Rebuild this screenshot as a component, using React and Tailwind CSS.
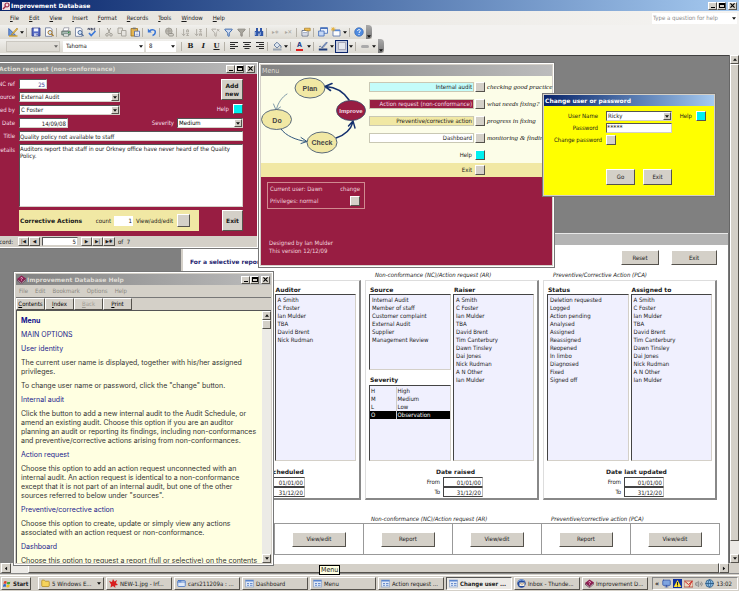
import { useState } from "react";
import {
  AppWindow,
  ArrowDownAZ,
  ArrowDownZA,
  Filter,
  FilterX,
  Folder,
  Globe,
  Monitor,
  Volume2,
} from "lucide-react";

const raised =
  "border border-t-white border-l-white border-b-[#55524c] border-r-[#55524c] bg-[#d4d0c8]";
const sunken = "border border-t-[#555] border-l-[#555] border-b-[#d4d0c8] border-r-[#d4d0c8] bg-white";
const bold = "font-[DejaVu_Sans,sans-serif] font-bold";

const PEOPLE = [
  "A Smith",
  "C Foster",
  "Ian Mulder",
  "TBA",
  "David Brent",
  "Tim Canterbury",
  "Dawn Tinsley",
  "Dai Jones",
  "Nick Rudman",
  "A N Other",
  "Ian Mulder",
];

const AUDITORS = ["A Smith", "C Foster", "Ian Mulder", "TBA", "David Brent", "Nick Rudman"];

const SOURCES = [
  "Internal Audit",
  "Member of staff",
  "Customer complaint",
  "External Audit",
  "Supplier",
  "Management Review",
];

const STATUSES = [
  "Deletion requested",
  "Logged",
  "Action pending",
  "Analysed",
  "Assigned",
  "Reassigned",
  "Reopened",
  "In limbo",
  "Diagnosed",
  "Fixed",
  "Signed off",
];

const SEVERITIES = [
  ["H", "High"],
  ["M", "Medium"],
  ["L", "Low"],
  ["O", "Observation"],
];

const Caret = () => (
  <svg viewBox="0 0 5 3" className="w-[4px] h-[3px] shrink-0" aria-hidden="true">
    <path d="M0 0h5L2.5 3z" fill="#111" />
  </svg>
);

/* Minimise / maximise / close */
const WindowButtons = () => (
  <div className="flex ml-auto shrink-0">
    <button aria-label="Minimise" className={`${raised} w-[9px] h-[8px] flex items-end justify-center`}>
      <span className="w-[4px] h-px bg-black mb-px" />
    </button>
    <button aria-label="Maximise" className={`${raised} w-[9px] h-[8px] flex items-center justify-center`}>
      <span className="w-[6px] h-[5px] border border-black border-t-2" />
    </button>
    <button aria-label="Close" className={`${raised} w-[9px] h-[8px] ml-[2px] flex items-center justify-center`}>
      <svg viewBox="0 0 6 6" className="w-[5px] h-[5px]">
        <path d="M.5.5l5 5M5.5.5l-5 5" stroke="#000" strokeWidth="1.4" />
      </svg>
    </button>
  </div>
);

const Combo = ({ id, label, value, className }) => (
  <div className={`${sunken} flex h-[10px] ${className}`}>
    <select id={id} aria-label={label} defaultValue={value} className="appearance-none flex-1 min-w-0 bg-transparent pl-px outline-none">
      <option>{value}</option>
    </select>
    <span className={`${raised} w-[8px] flex items-center justify-center pointer-events-none`}>
      <Caret />
    </span>
  </div>
);

const SquareButton = ({ label, cyan }) => (
  <button aria-label={label} className={`${raised} w-[10px] h-[10px] shrink-0 flex`}>
    {cyan && <span className="flex-1 self-stretch bg-[#00f0f0]" />}
  </button>
);

const MenuItems = ({ items, className }) => (
  <nav className={`flex items-center ${className}`}>
    {items.map((item) => (
      <button key={item}>
        <span className="underline">{item[0]}</span>
        {item.slice(1)}
      </button>
    ))}
  </nav>
);

/* Toolbar drawings, all on a 10 x 10 grid */
const Glyph = ({ children }) => (
  <svg viewBox="0 0 10 10" className="w-[10px] h-[10px]" fill="none" aria-hidden="true">
    {children}
  </svg>
);

const DesignGlyph = () => (
  <Glyph>
    <path d="M.8 1.500v7h7z" fill="#6f9be0" stroke="#2c55a8" strokeWidth=".8" />
    <path d="M9 1L4 6.500l-.8 1.600 1.700-.8L9.800 2z" fill="#efc04a" stroke="#9a7420" strokeWidth=".5" />
    <path d="M1 9h8.500" stroke="#d8a72e" strokeWidth="1.400" />
  </Glyph>
);

const SaveGlyph = () => (
  <Glyph>
    <path d="M1 1h8v8H1z" fill="#5468c4" stroke="#2f3b8c" strokeWidth=".8" />
    <path d="M2.800 1.400h4.400v3H2.800z" fill="#f2f4fb" />
    <path d="M3 6.200h4V9H3z" fill="#c6cdea" />
    <path d="M5.600 6.800h1v1.600h-1z" fill="#2f3b8c" />
  </Glyph>
);

const PageSearchGlyph = ({ accent }) => (
  <Glyph>
    <path d="M1.500.8h5l1.500 1.500v7H1.500z" fill="#fbfbfd" stroke="#6b7898" strokeWidth=".8" />
    <circle cx="6" cy="5.500" r="2" fill="#d5e6f8" stroke={accent} />
    <path d="M7.500 7l2 2" stroke={accent} strokeWidth="1.300" />
  </Glyph>
);

const PrintGlyph = () => (
  <Glyph>
    <path d="M3 .8h5L7 4H2z" fill="#fff" stroke="#778" strokeWidth=".6" />
    <path d="M.8 4.200h8.400v3.600H.8z" fill="#a9bcb4" stroke="#4c6059" strokeWidth=".8" />
    <path d="M2.500 6.800h5v2.400h-5z" fill="#f5f5f5" stroke="#4c6059" strokeWidth=".6" />
    <path d="M7 5.400h1.200" stroke="#2e9c3f" strokeWidth="1.100" />
  </Glyph>
);

const SpellingGlyph = () => (
  <Glyph>
    <path d="M1 3V1.400h1.500V3M4 .8V3h1.300V1.500H4M8.200 1.300H7V3h1.200" stroke="#333a55" strokeWidth=".8" />
    <path d="M2 6l2.200 2.600L8.500 4" stroke="#3b78d8" strokeWidth="1.600" />
  </Glyph>
);

const CutGlyph = () => (
  <Glyph>
    <path d="M3.200 1l3 5.500M6.800 1l-3 5.500" stroke="#a29f97" />
    <circle cx="3" cy="7.800" r="1.300" stroke="#a29f97" />
    <circle cx="7" cy="7.800" r="1.300" stroke="#a29f97" />
  </Glyph>
);

const CopyGlyph = () => (
  <Glyph>
    <path d="M1 1h4.500v5.500H1z" fill="#e6e4df" stroke="#a9a69e" />
    <path d="M4.500 3.500H9V9H4.500z" fill="#e6e4df" stroke="#a9a69e" />
  </Glyph>
);

const PasteGlyph = () => (
  <Glyph>
    <path d="M1 1.500h6.500V9H1z" fill="#e5b552" stroke="#9a7018" strokeWidth=".8" />
    <path d="M2.800.6h3v1.600h-3z" fill="#777" />
    <path d="M4.500 4.200h5v5h-5z" fill="#fff" stroke="#4562a5" strokeWidth=".8" />
    <path d="M5.500 6h3M5.500 7.500h3" stroke="#7f93c5" strokeWidth=".6" />
  </Glyph>
);

const UndoGlyph = () => (
  <Glyph>
    <path d="M2.500 4C5 1.800 8.500 2.800 8.300 5.200 8.200 7 7 8 5.500 8.500" stroke="#3a76d6" strokeWidth="1.500" />
    <path d="M.8 1.500v4h4z" fill="#3a76d6" />
  </Glyph>
);

const LinkGlyph = () => (
  <Glyph>
    <circle cx="4.800" cy="4.300" r="3.300" fill="#bdbab3" stroke="#97948c" strokeWidth=".8" />
    <path d="M2 4h5.500M4.800 1v6" stroke="#97948c" strokeWidth=".6" />
    <rect x="4.500" y="6.500" width="5" height="2.500" rx="1.200" fill="#d5d2cb" stroke="#88857d" strokeWidth=".8" />
  </Glyph>
);

const FindGlyph = () => (
  <Glyph>
    <path d="M2 1h2v3H2zM6 1h2v3H6zM.8 4h3.600v5H.8zM5.600 4h3.600v5H5.600zM4 4.500h2v2H4z" fill="#2f56a8" />
    <path d="M1.600 5v3M6.400 5v3" stroke="#a9c4f0" strokeWidth=".7" />
  </Glyph>
);

const PropertiesGlyph = () => (
  <Glyph>
    <path d="M1 3.500h6V9H1z" fill="#fff" stroke="#55627f" strokeWidth=".8" />
    <path d="M2 5.500h4M2 7h4" stroke="#8494b8" strokeWidth=".7" />
    <path d="M3.500 1.200h5.700v2.600H5.500L3.500 3z" fill="#efbd4f" stroke="#9a7018" strokeWidth=".6" />
  </Glyph>
);

const DatabaseGlyph = () => (
  <Glyph>
    <path d="M2.500.8h7v5.500h-7z" fill="#e9f0fb" stroke="#3c68b8" strokeWidth=".8" />
    <path d="M2.500 1.200h7" stroke="#3c68b8" strokeWidth="1.400" />
    <path d="M.6 4h5.500v5H.6z" fill="#c6d8f5" stroke="#3c68b8" strokeWidth=".8" />
  </Glyph>
);

const NewObjectGlyph = () => (
  <Glyph>
    <path d="M2 3h7v6H2z" fill="#fdfdfd" stroke="#5572a8" strokeWidth=".8" />
    <path d="M2 3.500h7" stroke="#5b8ad6" strokeWidth="1.400" />
    <path d="M2.200 0v4.500M0 2.200h4.500M.7.700l3 3M3.700.700l-3 3" stroke="#e3a92a" strokeWidth=".8" />
  </Glyph>
);

const HelpGlyph = () => (
  <Glyph>
    <circle cx="5" cy="5" r="4.300" fill="#4f8be0" stroke="#2a5aa8" strokeWidth=".6" />
    <path d="M3.600 3.900C3.700 2 6.500 2.200 6.300 3.900 6.200 4.800 5 4.900 5 6M5 7v1" stroke="#fff" strokeWidth="1" />
  </Glyph>
);

const AlignGlyph = ({ d }) => (
  <Glyph>
    <path d={d} stroke="#2c2c2c" strokeWidth="1" />
  </Glyph>
);

const FillGlyph = () => (
  <Glyph>
    <path d="M2 4l3-2.800 3 3-3 2.800z" fill="#dde6f0" stroke="#4f6a90" strokeWidth=".8" />
    <path d="M8 4c1.200 1 1.200 2 .8 2.800" stroke="#4f6a90" />
    <path d="M1 8.500h8.500" stroke="#9aa5b2" strokeWidth="2" />
  </Glyph>
);

const LineGlyph = () => (
  <Glyph>
    <path d="M8.500 1L4.500 5.500l-.6 1.400 1.400-.6L9.300 1.800z" fill="#8fa9d8" stroke="#3a568c" strokeWidth=".6" />
    <path d="M1 6c1-1 2-1 2.500.5" stroke="#3a568c" strokeWidth=".8" />
    <path d="M.8 8.500h8.500" stroke="#1f3d7c" strokeWidth="2" />
  </Glyph>
);

const HelpBook = () => (
  <svg viewBox="0 0 9 9" className="w-[9px] h-[9px] shrink-0" aria-hidden="true">
    <path d="M0 4L4.500.5 9 3.500 4.500 7.500z" fill="#8c1c50" />
    <path d="M0 4v1.500L4.500 9 9 5V3.500L4.500 7.500z" fill="#4a1030" />
    <path d="M.5 5l4 3.200L8.700 4.500" stroke="#f0e0e8" strokeWidth=".6" fill="none" />
    <path d="M3.500 3.300C4 2 6 2.500 5.300 3.600L4.500 4.300M4 5.200h.8" stroke="#ffd9e8" strokeWidth=".8" fill="none" />
  </svg>
);

const Divider = () => <span className="w-px h-[9px] ml-px mr-[2px] bg-[#b5b1a8] shrink-0" />;

const Tool = ({ icon: Icon, label, color = "text-[#2f5fa8]", ...rest }) => (
  <button aria-label={label} className={`w-[13px] h-[12px] shrink-0 flex items-center justify-center ${color}`}>
    <Icon size={9} strokeWidth={2.4} {...rest} />
  </button>
);

const DropCaret = () => (
  <span className="w-[6px] flex justify-center shrink-0">
    <Caret />
  </span>
);

const ToolbarEnd = () => (
  <span className="w-[6px] self-stretch ml-px bg-linear-to-b from-[#aaa] to-[#777] flex items-end justify-center pb-px rounded-r-sm shrink-0">
    <Caret />
  </span>
);

const gray = "text-[#aaa69e]";

const StandardToolbar = () => (
  <div className="flex items-center h-[14px] pl-[6px] w-fit bg-linear-to-b from-[#f1f0ed] to-[#dcd9d1]">
    <Tool icon={DesignGlyph} label="View" />
    <DropCaret />
    <Divider />
    <Tool icon={SaveGlyph} label="Save" />
    <Tool icon={PageSearchGlyph} label="File search" accent="#a5762a" />
    <Divider />
    <Tool icon={PrintGlyph} label="Print" />
    <Tool icon={PageSearchGlyph} label="Print preview" accent="#4d6a98" />
    <Tool icon={SpellingGlyph} label="Spelling" />
    <Divider />
    <Tool icon={CutGlyph} label="Cut" />
    <Tool icon={CopyGlyph} label="Copy" />
    <Tool icon={PasteGlyph} label="Paste" />
    <Divider />
    <Tool icon={UndoGlyph} label="Undo" />
    <Divider />
    <Tool icon={LinkGlyph} label="Insert hyperlink" />
    <Divider />
    <Tool icon={ArrowDownAZ} label="Sort ascending" color={gray} />
    <Tool icon={ArrowDownZA} label="Sort descending" color={gray} />
    <Divider />
    <Tool icon={FilterX} label="Filter by selection" color={gray} />
    <Tool icon={Filter} label="Filter by form" fill="#cfdcf2" />
    <Tool icon={Filter} label="Apply filter" color="text-[#8b8880]" fill="#a9a69e" />
    <Divider />
    <Tool icon={FindGlyph} label="Find" />
    <Divider />
    <button aria-label="New record" className="w-[13px] text-[#aaa69e]">▸∗</button>
    <button aria-label="Delete record" className="w-[13px] text-[#aaa69e]">▸✕</button>
    <Divider />
    <Tool icon={PropertiesGlyph} label="Properties" />
    <Divider />
    <Tool icon={DatabaseGlyph} label="Database window" />
    <Tool icon={NewObjectGlyph} label="New object" />
    <DropCaret />
    <Divider />
    <Tool icon={HelpGlyph} label="Help" />
    <ToolbarEnd />
  </div>
);

const FormatToolbar = () => (
  <div className="flex items-center h-[14px] pl-[6px] w-fit bg-linear-to-b from-[#f1f0ed] to-[#dcd9d1]">
    <div className="w-[54px] h-[11px] mr-[3px] border border-[#b5b1a8] bg-[#dcd9d2] flex items-center justify-end pr-px opacity-60">
      <Caret />
    </div>
    <div className="w-[81px] h-[11px] mr-[2px] bg-white flex items-center">
      <select aria-label="Font" className="appearance-none flex-1 pl-[3px] outline-none">
        <option>Tahoma</option>
      </select>
      <DropCaret />
    </div>
    <div className="w-[30px] h-[11px] mr-[4px] bg-white flex items-center">
      <select aria-label="Font size" className="appearance-none flex-1 min-w-0 pl-[3px] outline-none">
        <option>8</option>
      </select>
      <DropCaret />
    </div>
    <Divider />
    <button className="w-[13px] font-[DejaVu_Serif] text-[7px] font-bold">B</button>
    <button className="w-[13px] font-[DejaVu_Serif] text-[7px] font-bold italic">I</button>
    <button className="w-[13px] font-[DejaVu_Serif] text-[7px] font-bold underline">U</button>
    <Divider />
    <Tool icon={AlignGlyph} label="Align left" d="M1 1.500h8M1 3.500h5M1 5.500h8M1 7.500h5" />
    <Tool icon={AlignGlyph} label="Centre" d="M1 1.500h8M2.500 3.500h5M1 5.500h8M2.500 7.500h5" />
    <Tool icon={AlignGlyph} label="Align right" d="M1 1.500h8M4 3.500h5M1 5.500h8M4 7.500h5" />
    <Divider />
    <Tool icon={FillGlyph} label="Fill colour" />
    <DropCaret />
    <Divider />
    <button aria-label="Font colour" className="w-[13px] flex justify-center">
      <span className="border-b-2 border-[#e02020] text-[7px] leading-[7px] px-px font-bold text-[#24418c]">A</span>
    </button>
    <DropCaret />
    <Divider />
    <Tool icon={LineGlyph} label="Line colour" />
    <DropCaret />
    <button aria-label="Line width" className="w-[13px] h-[13px] border border-[#0a246a] bg-[#c9cede] flex items-center justify-center">
      <span className="w-[8px] h-[8px] border border-[#aab] bg-[#e6e8ef]" />
    </button>
    <DropCaret />
    <Divider />
    <button aria-label="Special effect" className="w-[13px] flex justify-center">
      <span className="w-[8px] h-[3px] bg-[#aaa] rounded-xs" />
    </button>
    <DropCaret />
    <ToolbarEnd />
  </div>
);

const FormRow = ({ id, label, children }) => (
  <div className="flex items-center gap-[4px]">
    <label htmlFor={id} className="w-[27px] shrink-0 whitespace-nowrap flex justify-end text-[#f5dfe6]">
      {label}
    </label>
    {children}
  </div>
);

/* Action request form, partly off the left of the desktop */
const ActionRequestWindow = () => (
  <section className="absolute left-[-13px] top-[6px] w-[271px] border border-white outline outline-[#777] bg-[#d4d0c8]">
    <header className={`${bold} flex items-center h-[11px] pl-[11px] pr-[2px] bg-linear-to-r from-[#828282] to-[#bcbcbc] text-[#dedbd4]`}>
      Action request (non-conformance)
      <WindowButtons />
    </header>
    <div className="bg-[#981d42] pt-[5px] pb-[3px] pr-[14px] flex flex-col gap-[3px] h-[162px]">
      <div className="flex justify-between">
        <div className="flex flex-col gap-[3px]">
          <FormRow id="ncref" label="NC ref">
            <input id="ncref" defaultValue="25" className={`${sunken} w-[28px] h-[10px] text-right pr-px text-[#3a3a90]`} />
          </FormRow>
          <FormRow id="source" label="Source">
            <Combo id="source" value="External Audit" className="w-[101px]" />
          </FormRow>
          <FormRow id="raisedby" label="Raised by">
            <Combo id="raisedby" value="C Foster" className="w-[101px]" />
          </FormRow>
        </div>
        <div className="flex flex-col items-end gap-[4px]">
          <button className={`${raised} ${bold} w-[22px] h-[21px]`}>Add new</button>
          <div className="flex items-center gap-[4px] text-[#f5dfe6]">
            Help
            <SquareButton label="Help" cyan />
          </div>
        </div>
      </div>
      <div className="flex justify-between">
        <FormRow id="date" label="Date">
          <input id="date" defaultValue="14/09/08" className={`${sunken} w-[49px] h-[10px] text-right pr-px`} />
        </FormRow>
        <div className="flex items-center gap-[3px] text-[#f5dfe6]">
          <label htmlFor="severity">Severity</label>
          <Combo id="severity" value="Medium" className="w-[66px] text-black" />
        </div>
      </div>
      <FormRow id="title" label="Title">
        <input id="title" defaultValue="Quality policy not available to staff" className={`${sunken} flex-1 h-[10px]`} />
      </FormRow>
      <div className="flex gap-[4px]">
        <label htmlFor="details" className="w-[27px] pt-[2px] shrink-0 flex justify-end text-[#f5dfe6]">
          Details
        </label>
        <textarea
          id="details"
          defaultValue="Auditors report that staff in our Orkney office have never heard of the Quality Policy."
          className={`${sunken} flex-1 h-[63px] leading-[7px] resize-none overflow-hidden`}
        />
      </div>
      <div className="flex justify-between pl-[31px]">
        <div className="flex items-center w-[180px] h-[21px] pl-px bg-[#f1e8a4]">
          <b className={`${bold} flex-1`}>Corrective Actions</b>
          <label htmlFor="count" className="mr-[3px]">count</label>
          <input id="count" defaultValue="1" className="w-[19px] h-[10px] bg-white text-right pr-px mr-[3px]" />
          View/add/edit
          <button aria-label="View, add or edit" className={`${raised} w-[13px] h-[13px] ml-[4px] mr-[9px]`} />
        </div>
        <button className={`${raised} ${bold} w-[21px] h-[21px]`}>Exit</button>
      </div>
    </div>
    <footer className="flex items-center h-[11px]">
      <label htmlFor="record" className="w-[25px] text-right mr-[5px]">Record:</label>
      <button aria-label="First record" className={`${raised} w-[11px] h-[9px] text-[5px] leading-none`}>|◀</button>
      <button aria-label="Previous record" className={`${raised} w-[11px] h-[9px] text-[5px] leading-none mr-[2px]`}>◀</button>
      <input id="record" defaultValue="5" className={`${sunken} w-[36px] h-[9px] text-right pr-px mr-[3px]`} />
      <button aria-label="Next record" className={`${raised} w-[11px] h-[9px] text-[5px] leading-none`}>▶</button>
      <button aria-label="Last record" className={`${raised} w-[11px] h-[9px] text-[5px] leading-none`}>▶|</button>
      <button aria-label="Add record" className={`${raised} w-[12px] h-[9px] text-[5px] leading-none mr-[3px]`}>▶✱</button>
      of&nbsp; 7
    </footer>
  </section>
);

const CycleDiagram = () => (
  <svg viewBox="0 0 106 80" className="w-[106px] h-[80px] shrink-0 font-[Liberation_Sans]" fontSize="7" fontWeight="bold" textAnchor="middle">
    <g fill="none" stroke="#14306e" strokeLinecap="round">
      <path d="M88 24C82 15 73 11 65 10.500M71 7.500l-7 3 5.500 4" strokeWidth="1.6" />
      <path d="M75 62c9-3 15-9 17-16M87.500 50l4.500-5 2 7" strokeWidth="1.400" />
      <path d="M26 18c-5 3-9 9-10.500 15M12.500 28l2.500 6 4.500-3" strokeWidth=".7" stroke="#4b708c" />
      <path d="M20 53c5 7 15 11 25 12.500M40 61.500l6 4-6 2" strokeWidth="1" stroke="#33597f" />
    </g>
    <g stroke="#33496b" strokeWidth=".8">
      <ellipse cx="49" cy="12" rx="15" ry="10" fill="#f1e8a4" />
      <ellipse cx="90" cy="34.500" rx="14.500" ry="10" fill="#981d42" />
      <ellipse cx="15.500" cy="43.500" rx="15" ry="10" fill="#f1e8a4" />
      <ellipse cx="61" cy="66.500" rx="15" ry="10.500" fill="#f1e8a4" />
    </g>
    <text x="49" y="14.500" fill="#444">Plan</text>
    <text x="90" y="37" fill="#f3dfe6" fontSize="6">Improve</text>
    <text x="16" y="46.500" fill="#444">Do</text>
    <text x="61" y="69" fill="#444">Check</text>
  </svg>
);

const MENU_ROWS = [
  { label: "Internal audit", note: "checking good practice", box: "bg-[#c4fcfa]" },
  { label: "Action request (non-conformance)", note: "what needs fixing?", box: "bg-[#981d42] text-[#f5dfe6]" },
  { label: "Preventive/corrective action", note: "progress in fixing", box: "bg-[#f1e8a4]" },
  { label: "Dashboard", note: "monitoring & finding", box: "bg-white" },
];

const MenuWindow = () => (
  <section className="absolute left-[259px] top-[7px] w-[295px] border border-white outline outline-[#777] bg-[#d4d0c8] p-px">
    <header className="flex items-center h-[11px] px-px bg-linear-to-r from-[#828282] to-[#bcbcbc] text-[#dedbd4] text-[7px]">
      Menu
    </header>
    <div className="bg-[#fcfde8] h-[87px] flex">
      <CycleDiagram />
      <div className="flex-1 pt-[6px] pl-[2px] flex flex-col gap-[7px]">
        {MENU_ROWS.map(({ label, note, box }) => (
          <div key={label} className="flex items-center gap-px">
            <span className={`w-[105px] h-[10px] border border-[#c9c8b4] flex items-center justify-end pr-px whitespace-nowrap ${box}`}>
              {label}
            </span>
            <SquareButton label={label} />
            <i className="font-[Liberation_Serif] text-[7px] whitespace-nowrap ml-px">{note}</i>
          </div>
        ))}
        <div className="flex items-center gap-px">
          <span className="w-[105px] text-right pr-[2px]">Help</span>
          <SquareButton label="Help" cyan />
        </div>
      </div>
    </div>
    <div className="bg-[#f1e8a4] h-[14px] flex items-center pl-[108px] gap-px">
      <span className="w-[105px] text-right pr-[2px]">Exit</span>
      <SquareButton label="Exit" />
    </div>
    <div className="bg-[#981d42] h-[88px] flex flex-col justify-between items-start pt-[5px] pl-[6px] pb-[10px] text-[#f1d4dd]">
      <div className="w-[98px] h-[27px] border border-[#d08a90] p-[2px] pr-[4px] flex flex-col justify-between">
        <div className="flex justify-between">
          <span>Current user: Dawn</span>
          <span>change</span>
        </div>
        <div className="flex justify-between items-center">
          Privileges: normal
          <SquareButton label="Change user" />
        </div>
      </div>
      <p className="pl-[2px]">
        Designed by Ian Mulder
        <br />
        This version 12/12/09
      </p>
    </div>
  </section>
);

const PasswordDialog = () => {
  const [password, setPassword] = useState("*****");

  return (
    <section className="absolute left-[543px] top-[38px] w-[172px] border border-[#d4d0c8] outline outline-[#777] bg-[#ffff00]">
      <header className={`${bold} flex items-center h-[11px] pl-px bg-linear-to-r from-[#0a246a] to-[#a6caf0] text-white`}>
        Change user or password
      </header>
      <div className="h-[89px] pt-[5px] pl-[4px] pr-[8px] flex flex-col">
        <div className="flex justify-between items-start">
          <div className="grid grid-cols-[54px_66px] gap-x-[4px] gap-y-[2px] items-center">
            <label htmlFor="user" className="text-right pr-[4px]">User Name</label>
            <Combo id="user" value="Ricky" className="w-[66px]" />
            <label htmlFor="password" className="text-right pr-[4px]">Password</label>
            <input
              id="password"
              value={password}
              onChange={(e) => setPassword(e.target.value)}
              className={`${sunken} w-[66px] h-[10px] text-[7px]`}
            />
            <span className="whitespace-nowrap flex justify-end">Change password</span>
            <SquareButton label="Change password" />
          </div>
          <div className="flex items-center gap-[4px]">
            Help
            <SquareButton label="Help" cyan />
          </div>
        </div>
        <div className="flex gap-[8px] pl-[58px] mt-auto mb-[10px]">
          <button className={`${raised} w-[29px] h-[16px]`}>Go</button>
          <button className={`${raised} w-[29px] h-[16px]`}>Exit</button>
        </div>
      </div>
    </section>
  );
};

const ListBox = ({ id, title, items, className }) => (
  <div className="flex flex-col w-[82px]">
    <label htmlFor={id} className={`${bold} h-[9px] flex items-center pl-px`}>
      {title}
    </label>
    <select
      id={id}
      multiple
      className={`appearance-none border border-t-[#444] border-l-[#444] border-b-[#d4d0c8] border-r-[#d4d0c8] bg-[#f0f0fe] p-0 py-px overflow-hidden outline-none rounded-none ${className}`}
    >
      {items.map((item, i) => (
        <option key={i} className="h-[8px] min-h-0 p-0 pl-[2px] leading-[8px]">
          {item}
        </option>
      ))}
    </select>
  </div>
);

const DateRange = ({ id, title, className }) => (
  <div className={`flex flex-col items-center pt-[6px] ${className}`}>
    <b className={`${bold} h-[10px] leading-[10px]`}>{title}</b>
    {[
      ["From", "01/01/00"],
      ["To", "31/12/20"],
    ].map(([label, value]) => (
      <div key={label} className="flex items-center">
        <label htmlFor={`${id}-${label}`} className="w-[18px] text-right mr-[3px]">{label}</label>
        <input
          id={`${id}-${label}`}
          defaultValue={value}
          className="w-[40px] h-[10px] mr-[6px] text-right pr-px border border-[#444] border-r-[#bbb] bg-white"
        />
      </div>
    ))}
  </div>
);

const Group = ({ caption, id, dateTitle, dateClass, children }) => (
  <div className="w-[174px] shrink-0">
    <i className="block h-[9px] leading-[8px] pl-[10px] whitespace-nowrap">{caption}</i>
    <div className="h-[220px] border border-t-[#ddd] border-l-[#ddd] border-b-2 border-r-2 border-b-[#888] border-r-[#888] pt-[4px] px-[3px]">
      <div className="flex gap-[2px]">{children}</div>
      <DateRange id={id} title={dateTitle} className={dateClass} />
    </div>
  </div>
);

const DashboardWindow = () => (
  <section className="absolute left-[181px] right-0 top-[177px] bottom-0 bg-white border-l-2 border-r border-l-[#d4d0c8] border-r-[#777] overflow-hidden">
    <header className="h-[12px] bg-[#b4b4b4] border-t border-[#e8e8e8]" />
    <div className="flex items-start gap-[12px] h-[26px] pt-[5px] pl-[7px] pr-[11px]">
      <b className={`${bold} text-[#1f1f70] pt-[8px] mr-auto`}>For a selective report</b>
      <button className={`${raised} w-[38px] h-[15px]`}>Reset</button>
      <button className={`${raised} w-[46px] h-[15px]`}>Exit</button>
    </div>
    <div className="flex gap-[4px] pl-[4px]">
      <Group id="audit" dateTitle="Date scheduled" dateClass="pl-[8px]">
        <ListBox id="audit-area" items={[]} className="h-[167px]" />
        <ListBox id="auditor" title="Auditor" items={AUDITORS} className="h-[167px]" />
      </Group>
      <Group id="nc" caption="Non-conformance (NC)/Action request (AR)" dateTitle="Date raised" dateClass="pl-[8px]">
        <div className="flex flex-col gap-[6px]">
          <ListBox id="nc-source" title="Source" items={SOURCES} className="h-[76px]" />
          <div>
            <b className={`${bold} block h-[9px] pl-px`}>Severity</b>
            <div className="h-[76px] w-[82px] border border-t-[#444] border-l-[#444] border-b-[#d4d0c8] border-r-[#d4d0c8] bg-[#f0f0fe] py-px">
              <table className="w-full border-collapse">
                <tbody>
                  {SEVERITIES.map(([code, name]) => (
                    <tr key={code} className={code === "O" ? "bg-black text-white" : ""}>
                      <td className="w-[26px] p-0 pl-px border-r border-[#ccc] leading-[8px]">{code}</td>
                      <td className="p-0 pl-px leading-[8px]">{name}</td>
                    </tr>
                  ))}
                </tbody>
              </table>
            </div>
          </div>
        </div>
        <ListBox id="nc-raiser" title="Raiser" items={PEOPLE} className="h-[167px]" />
      </Group>
      <Group id="pca" caption="Preventive/Corrective Action (PCA)" dateTitle="Date last updated" dateClass="pl-[14px]">
        <ListBox id="pca-status" title="Status" items={STATUSES} className="h-[167px]" />
        <ListBox id="pca-assigned" title="Assigned to" items={PEOPLE} className="h-[167px]" />
      </Group>
    </div>
    <div className="grid grid-cols-[178px_178px] mt-[15px] pl-[182px] leading-[8px] italic">
      <span className="pl-[6px] whitespace-nowrap">Non-conformance (NC)/Action request (AR)</span>
      <span className="pl-[8px] whitespace-nowrap">Preventive/corrective action (PCA)</span>
    </div>
    <div className="flex ml-[2px] w-fit border-l border-y border-[#999]">
      {["Report", "View/edit", "Report", "View/edit", "Report", "View/edit"].map((label, i) => (
        <div key={i} className="w-[89px] h-[30px] border-r border-[#999] flex items-center justify-center">
          <button className={`${raised} w-[54px] h-[15px]`}>{label}</button>
        </div>
      ))}
    </div>
  </section>
);

const HelpHeading = ({ children }) => <h3 className="text-[#22228c]">{children}</h3>;

const HelpWindow = () => (
  <section className="absolute left-[14px] top-[216px] w-[259px] border border-white outline outline-[#777] bg-[#d4d0c8] p-px">
    <header className={`${bold} flex items-center gap-px h-[11px] px-px bg-linear-to-r from-[#828282] to-[#bcbcbc] text-[#dedbd4]`}>
      <HelpBook />
      Improvement Database Help
      <WindowButtons />
    </header>
    <nav className="flex items-center gap-[7px] h-[12px] pl-[3px] text-[#8b8880]">
      {["File", "Edit", "Bookmark", "Options", "Help"].map((item) => (
        <button key={item}>{item}</button>
      ))}
    </nav>
    <div className="flex h-[13px] border-t border-[#777]">
      {["Contents", "Index", "Back", "Print"].map((item) => (
        <button key={item} className={`${raised} w-[29px] ${item === "Back" ? "text-[#a09c94]" : "text-black"}`}>
          <span className="underline">{item[0]}</span>
          {item.slice(1)}
        </button>
      ))}
    </div>
    <div className="flex h-[253px] border-t border-l border-[#555]">
      <article className="flex-1 min-w-0 bg-[#ffffe1] overflow-hidden pt-[5px] pl-[4px] flex flex-col gap-[5px] font-[Inter,sans-serif] text-[7px] leading-[9px] text-[#333] whitespace-nowrap">
        <h2 className="font-bold text-[#10108c]">Menu</h2>
        <HelpHeading>MAIN OPTIONS</HelpHeading>
        <HelpHeading>User identity</HelpHeading>
        <p>
          The current user name is displayed, together with his/her assigned
          <br />
          privileges.
        </p>
        <p>To change user name or password, click the "change" button.</p>
        <HelpHeading>Internal audit</HelpHeading>
        <p>
          Click the button to add a new internal audit to the Audit Schedule, or
          <br />
          amend an existing audit. Choose this option if you are an auditor
          <br />
          planning an audit or reporting its findings, including non-conformances
          <br />
          and preventive/corrective actions arising from non-conformances.
        </p>
        <HelpHeading>Action request</HelpHeading>
        <p>
          Choose this option to add an action request unconnected with an
          <br />
          internal audit. An action request is identical to a non-conformance
          <br />
          except that it is not part of an internal audit, but one of the other
          <br />
          sources referred to below under "sources".
        </p>
        <HelpHeading>Preventive/corrective action</HelpHeading>
        <p>
          Choose this option to create, update or simply view any actions
          <br />
          associated with an action request or non-conformance.
        </p>
        <HelpHeading>Dashboard</HelpHeading>
        <p>Choose this option to request a report (full or selective) on the contents</p>
      </article>
      <div className="w-[9px] shrink-0 bg-[#ecebe6] flex flex-col">
        <button aria-label="Scroll up" className={`${raised} h-[9px] flex items-center justify-center`}>
          <span className="rotate-180 flex"><Caret /></span>
        </button>
        <span className={`${raised} h-[9px]`} />
        <button aria-label="Scroll down" className={`${raised} h-[9px] mt-auto flex items-center justify-center`}>
          <Caret />
        </button>
      </div>
    </div>
  </section>
);

const FormIcon = () => (
  <svg viewBox="0 0 9 9" className="w-[9px] h-[9px] shrink-0">
    <rect x=".5" y="1" width="8" height="7" fill="#dfe8f7" stroke="#9aaccb" strokeWidth=".8" />
    <path d="M.5 1h8v1.500h-8z" fill="#5c88d0" />
    <path d="M2 4.500h2M5 4.500h2.500M2 6.300h2M5 6.300h2.500" stroke="#4a76c4" strokeWidth=".8" />
  </svg>
);

const TASKS = [
  { label: "5 Windows E...", icon: <Folder size={9} fill="#f5d35c" className="text-[#b08a20] shrink-0" />, caret: true },
  {
    label: "NEW-1.jpg - Irf...",
    icon: (
      <svg viewBox="0 0 9 9" className="w-[9px] h-[9px] shrink-0">
        <path d="M0 2l3 1 1-3 1.500 2.500L8 1 7 4l2 2-3 .500L6.500 9 4 7 1.500 8.500 2 5.500z" fill="#d81e1e" />
      </svg>
    ),
  },
  { label: "cars211209a : ...", icon: <AppWindow size={9} className="text-[#3d6fc0] shrink-0" fill="#dfe9f8" /> },
  { label: "Dashboard", icon: <FormIcon /> },
  { label: "Menu", icon: <FormIcon /> },
  { label: "Action request ...", icon: <FormIcon /> },
  { label: "Change user ...", icon: <FormIcon />, active: true },
  {
    label: "Inbox - Thunde...",
    icon: (
      <svg viewBox="0 0 9 9" className="w-[9px] h-[9px] shrink-0">
        <circle cx="4.500" cy="4.500" r="4.200" fill="#234a9c" />
        <path d="M2.500 3.500h5v3.500h-5z" fill="#f1ece0" />
        <path d="M2.500 3.500L5 5.500l2.500-2" stroke="#8a6a40" strokeWidth=".6" fill="none" />
        <path d="M1 2.500C3 .5 6 .5 7.500 2" stroke="#8fb8f0" fill="none" />
      </svg>
    ),
  },
  { label: "Improvement D...", icon: <HelpBook /> },
];

const Taskbar = () => (
  <footer className="flex items-center h-[16px] px-px bg-[#d4d0c8] border-t border-white">
    <button className={`${raised} w-[30px] h-[13px] mr-[7px] flex items-center gap-[2px] pl-px font-bold`}>
      <svg viewBox="0 0 8 8" className="w-[8px] h-[8px]">
        <path d="M1 1.500q1.500-1 2.700 0L3.200 4Q2 3.200.5 4z" fill="#e0402a" />
        <path d="M4.300 1.700q1.500.8 3 0L6.800 4q-1.500.8-3 0z" fill="#46a33a" />
        <path d="M.4 4.500q1.500-.8 2.700 0L2.600 7Q1.400 6.200 0 7z" fill="#2d63c8" />
        <path d="M3.700 4.700q1.500.8 3 0L6.200 7q-1.500.8-3 0z" fill="#f0c020" />
      </svg>
      Start
    </button>
    <div className="flex flex-1 min-w-0 gap-[2px]">
      {TASKS.map(({ label, icon, caret, active }) => (
        <button
          key={label}
          className={`flex-1 min-w-0 h-[13px] flex items-center gap-[2px] px-[2px] whitespace-nowrap ${
            active
              ? "border border-t-[#555] border-l-[#555] border-b-white border-r-white bg-[#eceae6] font-bold"
              : raised
          }`}
        >
          {icon}
          {label}
          {caret && <span className="ml-auto"><Caret /></span>}
        </button>
      ))}
    </div>
    <div className="w-[86px] h-[13px] ml-[4px] pl-[2px] pr-[5px] border border-t-[#888] border-l-[#888] border-b-white border-r-white flex items-center gap-[2px]">
      <b className="text-[7px]">«</b>
      <Monitor size={9} className="text-[#2d50a8] ml-px" fill="#7fa4e0" />
      <svg viewBox="0 0 9 9" className="w-[9px] h-[9px]">
        <path d="M0 0h9v9H0z" fill="#1030a0" />
        <path d="M4.500 1l3.800 7H.7z" fill="#ffe030" />
        <path d="M4.500 3v3M4.500 6.500v1" stroke="#111" strokeWidth=".9" />
      </svg>
      <svg viewBox="0 0 9 9" className="w-[9px] h-[9px]">
        <path d="M0 2h9v6H0z" fill="#e9d9c0" stroke="#b04030" strokeWidth=".8" />
        <path d="M1 2.500l3.500 3L8 2.500M5 8l3-6" stroke="#d02a2a" fill="none" />
      </svg>
      <Volume2 size={8} className="text-[#777]" fill="#bbb" />
      <Globe size={9} className="text-[#20507c]" fill="#8fc0e8" />
      <span className="ml-auto">13:02</span>
    </div>
  </footer>
);

export default function App() {
  return (
    <div className="min-h-screen flex flex-col overflow-hidden bg-[#d4d0c8] font-[DejaVu_Sans_Condensed,DejaVu_Sans,sans-serif] text-[6px] leading-[8px] text-[#1a1a1a]">
      {/* Application title */}
      <header className={`${bold} flex items-center h-[11px] pl-[2px] pr-[2px] bg-linear-to-r from-[#0a246a] to-[#a6caf0] text-white`}>
        <svg viewBox="0 0 8 8" className="w-[8px] h-[8px] mr-px">
          <path d="M0 0h8v8H0z" fill="#f3dfe4" />
          <circle cx="5" cy="3" r="2" fill="none" stroke="#a02848" strokeWidth="1.200" />
          <path d="M3.700 4.300L1 7" stroke="#a02848" strokeWidth="1.400" />
        </svg>
        Improvement Database
        <WindowButtons />
      </header>

      {/* Menu and toolbars */}
      <div className="bg-[#f3f2f0] h-[44px]">
        <div className="flex items-center h-[14px] pl-[10px] pr-[2px] bg-linear-to-r from-[#e6e3dc] to-[#f4f3f1]">
          <MenuItems
            items={["File", "Edit", "View", "Insert", "Format", "Records", "Tools", "Window", "Help"]}
            className="gap-[10px]"
          />
          <div className="ml-auto w-[85px] h-[11px] flex items-center bg-white">
            <input aria-label="Type a question for help" placeholder="Type a question for help" className="flex-1 min-w-0 outline-none placeholder:text-[#8b8b8b] pl-px" />
            <DropCaret />
          </div>
        </div>
        <StandardToolbar />
        <FormatToolbar />
      </div>

      {/* Desktop with its child windows */}
      <div className="flex flex-1">
        <main className="relative flex-1 bg-[#808080] border-t border-[#404040]">
          <DashboardWindow />
          <ActionRequestWindow />
          <MenuWindow />
          <PasswordDialog />
          <HelpWindow />
        </main>
        <div className="w-[10px] border-l border-[#666] flex flex-col bg-[#eceae6]">
          <button aria-label="Scroll up" className={`${raised} h-[9px] flex items-center justify-center`}>
            <span className="rotate-180 flex"><Caret /></span>
          </button>
          <span className={`${raised} flex-1 mb-[13px]`} />
          <button aria-label="Scroll down" className={`${raised} h-[9px] flex items-center justify-center`}>
            <Caret />
          </button>
        </div>
      </div>
      <div className="flex h-[10px] pl-px pr-[10px]">
        <button aria-label="Scroll left" className={`${raised} w-[10px] flex items-center justify-center`}>
          <span className="rotate-90 flex"><Caret /></span>
        </button>
        <span className="w-[17px] bg-[#eceae6]" />
        <span className={`${raised} flex-1`} />
        <button aria-label="Scroll right" className={`${raised} w-[10px] flex items-center justify-center`}>
          <span className="-rotate-90 flex"><Caret /></span>
        </button>
      </div>
      <div className="relative h-[2px] border-t border-[#888]">
        <span role="tooltip" className="absolute left-[319px] bottom-0 h-[10px] px-px border border-black bg-[#ffffe1] text-[7px]">
          Menu
        </span>
      </div>
      <Taskbar />
    </div>
  );
}
